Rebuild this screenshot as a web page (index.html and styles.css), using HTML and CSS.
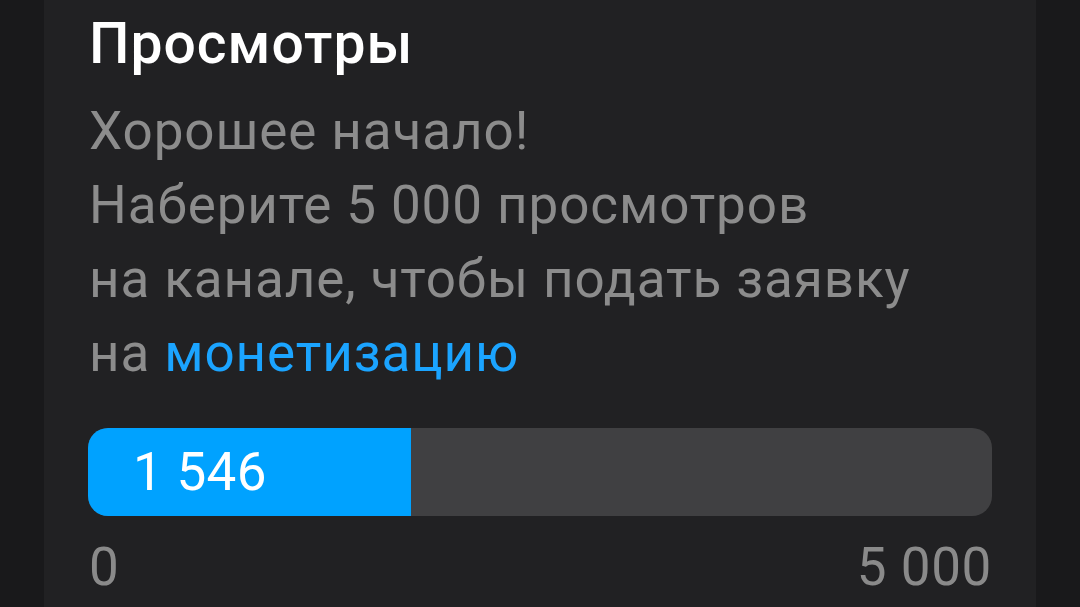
FILE: index.html
```html
<!DOCTYPE html>
<html lang="ru">
<head>
<meta charset="utf-8">
<link rel="stylesheet" href="styles.css">
</head>
<body>
<div class="card">
  <h1 class="title">Просмотры</h1>
  <p class="desc">Хорошее начало!<br>Наберите 5&nbsp;000 просмотров<br>на канале, чтобы подать заявку<br>на <a class="link">монетизацию</a></p>
  <div class="bar">
    <div class="fill" style="width: 35.7%"><span class="value">1&nbsp;546</span></div>
  </div>
  <div class="scale"><span>0</span><span>5&nbsp;000</span></div>
</div>
</body>
</html>
```
FILE: styles.css
```css
html, body {
  margin: 0;
  padding: 0;
  background: #19191b;
  height: 100%;
  overflow: hidden;
}
body {
  font-family: Roboto, "Noto Sans", sans-serif;
}
.card {
  margin-left: 44px;
  width: 992px;
  height: 607px;
  box-sizing: border-box;
  padding: 12px 44px 0 44px;
  background: #212123;
}
.title {
  margin: 0;
  font-size: 57px;
  line-height: 64px;
  font-weight: 500;
  letter-spacing: 1px;
  color: #ffffff;
  padding-left: 1px;
}
.desc {
  margin: 18px 0 0 0;
  font-size: 53px;
  line-height: 74px;
  letter-spacing: 0.9px;
  color: #8c8c8c;
  padding-left: 1px;
}
.link {
  color: #1ba4ff;
}
.bar {
  margin-top: 38px;
  height: 88px;
  border-radius: 20px;
  background: #404042;
  overflow: hidden;
  display: flex;
}
.fill {
  background: #00a2ff;
  height: 100%;
  display: flex;
  align-items: center;
  padding-left: 45px;
  box-sizing: border-box;
}
.value {
  color: #ffffff;
  font-size: 53px;
  letter-spacing: 0.3px;
}
.scale {
  display: flex;
  justify-content: space-between;
  font-size: 53px;
  letter-spacing: 0.6px;
  color: #8a8a8a;
  margin-top: 20px;
  padding-left: 1px;
}
```
